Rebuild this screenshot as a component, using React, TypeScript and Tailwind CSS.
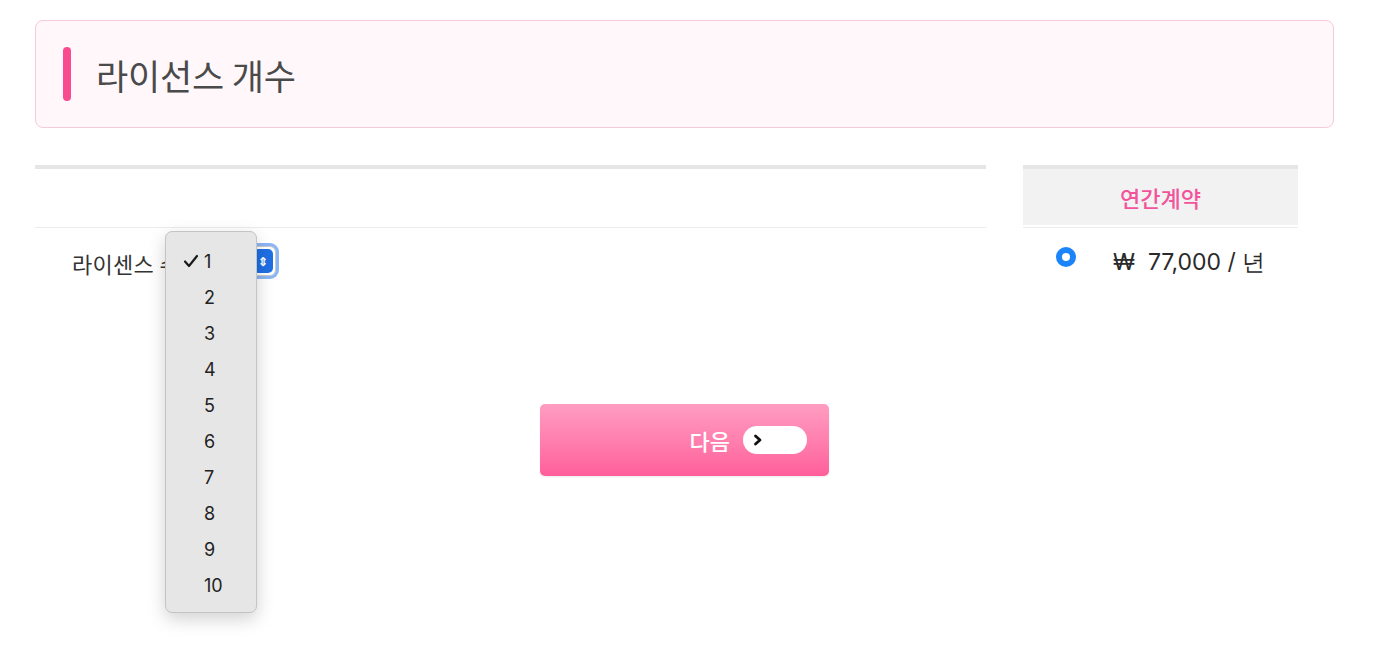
import React from "react";

const counts = [1, 2, 3, 4, 5, 6, 7, 8, 9, 10];

const App: React.FC = () => {
  return (
    <div className="min-h-[663px] bg-white px-[35px] pt-[20px] font-['Noto_Sans_CJK_KR',sans-serif] text-[#333]">
      <div className="flex h-[108px] w-[1299px] items-center rounded-[8px] border border-[#f6c9dc] bg-[#fff7fa] pl-[27px]">
        <span className="h-[54px] w-[8px] rounded-full bg-[#f94b8f]" />
        <h1 className="ml-[25px] text-[35px] font-normal leading-none tracking-[-0.2px] text-[#4a4a4a]">
          라이선스 개수
        </h1>
      </div>

      <div className="mt-[37px] flex gap-[37px]">
        <div className="w-[951px]">
          <div className="h-[4px] bg-[#e6e6e6]" />
          <div className="h-[59px] border-b border-[#ececec]" />
          <div className="relative flex h-[66px] items-center pl-[37px] text-[22px]">
            <span className="mt-[4px] tracking-[0.3px]">라이센스 수</span>
            <div className="-ml-[4px] flex h-[30px] w-[100px] items-center justify-end rounded-[6px] border border-[#c9c9c9] bg-white pr-[2px] shadow-[0_0_0_3px_#8bb6f5]">
              <span className="flex h-[24px] w-[20px] items-center justify-center rounded-[5px] bg-[#1f6fe5] text-[12px] font-bold leading-none text-white">
                ⇕
              </span>
            </div>

            <div className="absolute left-[130px] top-[3px] z-10 w-[92px] rounded-[7px] border border-[#c4c4c4] bg-[#e6e6e6] pb-[9px] pt-[11px] shadow-[0_6px_18px_rgba(0,0,0,0.18)]">
              {counts.map((n) => (
                <div key={n} className="relative flex h-[36px] items-center pl-[38px] font-['Inter',sans-serif] text-[18px] text-[#222]">
                  {n === 1 && (
                    <svg className="absolute left-[17px] top-[11px]" width="16" height="14" viewBox="0 0 16 14" fill="none">
                      <path d="M2 7.5 6 12 14 2" stroke="#1a1a1a" strokeWidth="2.2" strokeLinecap="round" strokeLinejoin="round" />
                    </svg>
                  )}
                  {n}
                </div>
              ))}
            </div>
          </div>
        </div>

        <div className="w-[275px]">
          <div className="h-[4px] bg-[#e6e6e6]" />
          <div className="flex h-[56px] items-center justify-center bg-[#f2f2f2] text-[22px] font-medium text-[#f2549c]">
            연간계약
          </div>
          <div className="h-[3px] border-b border-[#ececec]" />
          <div className="flex h-[66px] items-center pl-[33px]">
            <span className="-mt-[8px] flex h-[20px] w-[20px] items-center justify-center rounded-full bg-[#1a84f8]">
              <span className="h-[8px] w-[8px] rounded-full bg-white" />
            </span>
            <span className="ml-[37px] mt-[2px] font-['Inter',sans-serif] text-[23px] text-[#2a2a2a]">
              ₩&nbsp; 77,000 / 년
            </span>
          </div>
        </div>
      </div>

      <div className="mt-[110px] flex w-[1299px] justify-center">
        <button className="flex h-[72px] w-[289px] items-center justify-end rounded-[5px] bg-gradient-to-b from-[#ff9dc1] to-[#ff5e9b] pr-[22px] shadow-[0_1px_2px_rgba(0,0,0,0.08)]">
          <span className="text-[22px] font-medium text-white">다음</span>
          <span className="ml-[13px] flex h-[28px] w-[64px] items-center rounded-full bg-white pl-[10px]">
            <svg width="10" height="12" viewBox="0 0 10 12" fill="none">
              <path d="M2.5 2 7 6 2.5 10" stroke="#111" strokeWidth="2.8" strokeLinecap="round" strokeLinejoin="round" />
            </svg>
          </span>
        </button>
      </div>
    </div>
  );
};

export default App;
